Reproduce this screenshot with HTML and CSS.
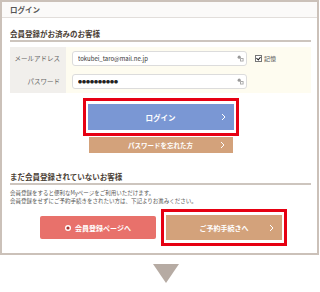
FILE: index.html
```html
<!DOCTYPE html>
<html lang="ja">
<head>
    <meta charset="UTF-8">
    <meta name="viewport" content="width=device-width, initial-scale=1.0">
    <title>ログイン</title>
    <link rel="stylesheet" href="styles.css">
</head>
<body>
<div class="frame">
    <div class="frame-head">ログイン</div>

    <div class="frame-body">
        <h2 class="section-title">会員登録がお済みのお客様</h2>

        <div class="login-form">
            <div class="label-col">
                <label for="mail">メールアドレス</label>
                <label for="pass">パスワード</label>
            </div>
            <div class="field-col">
                <div class="field-row">
                    <div class="input-box">
                        <input type="text" id="mail" value="tokubei_taro@mail.ne.jp">
                        <svg class="key" width="7" height="7" viewBox="0 0 7 7"><circle cx="2.2" cy="2.2" r="1.6" fill="#999"/><rect x="3" y="3" width="3.6" height="3.6" rx="0.6" fill="#aaa"/><rect x="4" y="4" width="1.6" height="1.6" fill="#fff"/></svg>
                    </div>
                    <span class="remember"><span class="check"></span>記憶</span>
                </div>
                <div class="field-row">
                    <div class="input-box">
                        <input type="text" id="pass" class="dots" value="●●●●●●●●●●">
                        <svg class="key" width="7" height="7" viewBox="0 0 7 7"><circle cx="2.2" cy="2.2" r="1.6" fill="#999"/><rect x="3" y="3" width="3.6" height="3.6" rx="0.6" fill="#aaa"/><rect x="4" y="4" width="1.6" height="1.6" fill="#fff"/></svg>
                    </div>
                </div>
            </div>
        </div>

        <div class="btn-area">
            <div class="mark">
                <button class="btn btn-login">ログイン
                    <svg class="chev" width="5" height="8" viewBox="0 0 5 8"><polyline points="1,1 4,4 1,7" fill="none" stroke="#fff" stroke-width="1"/></svg>
                </button>
            </div>
            <button class="btn btn-forgot">パスワードを忘れた方
                <svg class="chev" width="5" height="8" viewBox="0 0 5 8"><polyline points="1,1 4,4 1,7" fill="none" stroke="#fff" stroke-width="1"/></svg>
            </button>
        </div>

        <h2 class="section-title second">まだ会員登録されていないお客様</h2>
        <p class="note">会員登録をすると便利なMyページをご利用いただけます。<br>会員登録をせずにご予約手続きをされたい方は、下記よりお進みください。</p>

        <div class="guest-row">
            <button class="btn btn-register">
                <svg width="6" height="6" viewBox="0 0 6 6"><circle cx="3" cy="3" r="3" fill="#fff"/><circle cx="3" cy="3" r="1.6" fill="#a8302c"/></svg>
                会員登録ページへ
            </button>
            <div class="mark">
                <button class="btn btn-reserve">ご予約手続きへ
                    <svg class="chev" width="5" height="8" viewBox="0 0 5 8"><polyline points="1,1 4,4 1,7" fill="none" stroke="#fff" stroke-width="1"/></svg>
                </button>
            </div>
        </div>
    </div>
</div>
<div class="arrow"></div>
</body>
</html>
```

FILE: styles.css
```css
body {
    margin: 0;
    background-color: #fff;
    font-family: "Noto Sans CJK JP", "Noto Sans", sans-serif;
    color: #4a4039;
    width: 320px;
}

.frame {
    width: 319px;
    box-sizing: border-box;
    border: 2px solid #cbc1b9;
}

.frame-head {
    height: 15px;
    line-height: 15px;
    padding-left: 8px;
    font-size: 7.5px;
    font-weight: bold;
    color: #555;
    background-color: #fbfaf9;
    border-bottom: 1px solid #e2dedb;
}

.frame-body {
    padding: 0 6px 7px 8px;
}

.section-title {
    margin: 0;
    padding-top: 10px;
    line-height: 12px;
    font-size: 7.5px;
    font-weight: bold;
    color: #4a3e35;
    border-bottom: 2px solid #cdc5be;
}

.section-title.second {
    padding-top: 18px;
}

.login-form {
    display: flex;
    margin-top: 5px;
    height: 46px;
}

.label-col {
    width: 56px;
    background-color: #f1efec;
    display: flex;
    flex-direction: column;
    gap: 8px;
    padding: 4px 0;
    box-sizing: border-box;
}

.label-col label {
    height: 15px;
    line-height: 15px;
    text-align: right;
    padding-right: 6px;
    font-size: 6.5px;
    color: #666;
}

.field-col {
    flex: 1;
    background-color: #fefcf0;
    display: flex;
    flex-direction: column;
    gap: 8px;
    padding: 4px 6px;
    box-sizing: border-box;
}

.field-row {
    display: flex;
    align-items: center;
    height: 15px;
}

.input-box {
    position: relative;
    width: 175px;
    height: 15px;
}

.input-box input {
    display: block;
    width: 100%;
    height: 15px;
    box-sizing: border-box;
    border: 1px solid #dcdcdc;
    border-radius: 3px;
    background-color: #fff;
    padding: 0 0 0 5px;
    margin: 0;
    font-family: inherit;
    font-size: 6px;
    color: #333;
    outline: none;
}

.input-box input.dots {
    font-size: 4px;
    letter-spacing: 0;
    color: #222;
}

.input-box .key {
    position: absolute;
    right: 3px;
    top: 4px;
}

.remember {
    display: flex;
    align-items: center;
    gap: 2px;
    margin-left: 8px;
    font-size: 6px;
    color: #555;
}

.check {
    width: 5px;
    height: 5px;
    border: 1px solid #777;
    background-color: #fff;
    position: relative;
}

.check::after {
    content: "";
    position: absolute;
    left: 1px;
    top: 0;
    width: 2px;
    height: 3px;
    border: solid #222;
    border-width: 0 1px 1px 0;
    transform: rotate(40deg);
}

.btn-area {
    display: flex;
    flex-direction: column;
    align-items: center;
    margin-top: 5px;
}

.mark {
    border: 3px solid #e60012;
    padding: 3px 2px;
    background-color: #fff;
}

.btn {
    position: relative;
    border: none;
    color: #fff;
    font-family: inherit;
    font-weight: bold;
    cursor: pointer;
    display: flex;
    align-items: center;
    justify-content: center;
    gap: 4px;
    padding: 0;
}

.btn .chev {
    position: absolute;
    right: 8px;
    top: 50%;
    margin-top: -4px;
}

.btn-login {
    width: 146px;
    height: 26px;
    background-color: #7a97d4;
    font-size: 7.5px;
}

.btn-forgot {
    width: 144px;
    height: 16px;
    margin-top: 1px;
    background-color: #d3a27b;
    font-size: 6.5px;
}

.note {
    margin: 4px 0 0;
    font-size: 5.5px;
    line-height: 8px;
    color: #555;
}

.guest-row {
    display: flex;
    justify-content: center;
    align-items: center;
    gap: 5px;
    margin-top: 4px;
    padding-left: 6px;
}

.btn-register {
    width: 116px;
    height: 23px;
    border-radius: 2px;
    background-color: #e8716b;
    font-size: 7px;
}

.btn-reserve {
    width: 116px;
    height: 25px;
    background-color: #d3a27b;
    font-size: 7px;
}

.arrow {
    width: 0;
    height: 0;
    margin: 9px 0 0 153px;
    border-left: 13.5px solid transparent;
    border-right: 13.5px solid transparent;
    border-top: 19px solid #b6aba3;
}
```
